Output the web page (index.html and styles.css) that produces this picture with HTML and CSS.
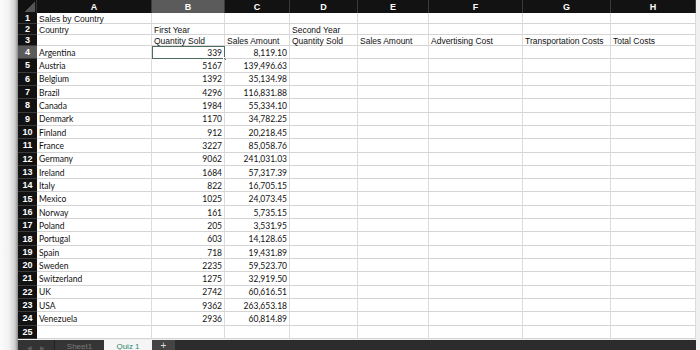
FILE: index.html
```html
<!DOCTYPE html>
<html lang="en">
<head>
  <meta charset="UTF-8" />
  <title>Sales by Country</title>
  <link rel="stylesheet" href="styles.css">
</head>
<body>
  <div class="page">
    <div class="sheet">
      <!-- column headers -->
      <div class="corner"></div>
      <div class="ch">A</div><div class="ch active">B</div><div class="ch">C</div><div class="ch">D</div>
      <div class="ch">E</div><div class="ch">F</div><div class="ch">G</div><div class="ch">H</div>

      <!-- title rows -->
      <div class="rh">1</div><div class="c head">Sales by Country</div><div class="c"></div><div class="c"></div><div class="c"></div><div class="c"></div><div class="c"></div><div class="c"></div><div class="c"></div>
      <div class="rh">2</div><div class="c head">Country</div><div class="c head">First Year</div><div class="c"></div><div class="c head">Second Year</div><div class="c"></div><div class="c"></div><div class="c"></div><div class="c"></div>
      <div class="rh">3</div><div class="c"></div><div class="c head">Quantity Sold</div><div class="c head">Sales Amount</div><div class="c head">Quantity Sold</div><div class="c head">Sales Amount</div><div class="c head">Advertising Cost</div><div class="c head">Transportation Costs</div><div class="c head">Total Costs</div>

      <!-- data rows -->
      <div class="rh active">4</div><div class="c">Argentina</div><div class="c n selected">339<span class="handle"></span></div><div class="c n">8,119.10</div><div class="c"></div><div class="c"></div><div class="c"></div><div class="c"></div><div class="c"></div>
      <div class="rh">5</div><div class="c">Austria</div><div class="c n">5167</div><div class="c n">139,496.63</div><div class="c"></div><div class="c"></div><div class="c"></div><div class="c"></div><div class="c"></div>
      <div class="rh">6</div><div class="c">Belgium</div><div class="c n">1392</div><div class="c n">35,134.98</div><div class="c"></div><div class="c"></div><div class="c"></div><div class="c"></div><div class="c"></div>
      <div class="rh">7</div><div class="c">Brazil</div><div class="c n">4296</div><div class="c n">116,831.88</div><div class="c"></div><div class="c"></div><div class="c"></div><div class="c"></div><div class="c"></div>
      <div class="rh">8</div><div class="c">Canada</div><div class="c n">1984</div><div class="c n">55,334.10</div><div class="c"></div><div class="c"></div><div class="c"></div><div class="c"></div><div class="c"></div>
      <div class="rh">9</div><div class="c">Denmark</div><div class="c n">1170</div><div class="c n">34,782.25</div><div class="c"></div><div class="c"></div><div class="c"></div><div class="c"></div><div class="c"></div>
      <div class="rh">10</div><div class="c">Finland</div><div class="c n">912</div><div class="c n">20,218.45</div><div class="c"></div><div class="c"></div><div class="c"></div><div class="c"></div><div class="c"></div>
      <div class="rh">11</div><div class="c">France</div><div class="c n">3227</div><div class="c n">85,058.76</div><div class="c"></div><div class="c"></div><div class="c"></div><div class="c"></div><div class="c"></div>
      <div class="rh">12</div><div class="c">Germany</div><div class="c n">9062</div><div class="c n">241,031.03</div><div class="c"></div><div class="c"></div><div class="c"></div><div class="c"></div><div class="c"></div>
      <div class="rh">13</div><div class="c">Ireland</div><div class="c n">1684</div><div class="c n">57,317.39</div><div class="c"></div><div class="c"></div><div class="c"></div><div class="c"></div><div class="c"></div>
      <div class="rh">14</div><div class="c">Italy</div><div class="c n">822</div><div class="c n">16,705.15</div><div class="c"></div><div class="c"></div><div class="c"></div><div class="c"></div><div class="c"></div>
      <div class="rh">15</div><div class="c">Mexico</div><div class="c n">1025</div><div class="c n">24,073.45</div><div class="c"></div><div class="c"></div><div class="c"></div><div class="c"></div><div class="c"></div>
      <div class="rh">16</div><div class="c">Norway</div><div class="c n">161</div><div class="c n">5,735.15</div><div class="c"></div><div class="c"></div><div class="c"></div><div class="c"></div><div class="c"></div>
      <div class="rh">17</div><div class="c">Poland</div><div class="c n">205</div><div class="c n">3,531.95</div><div class="c"></div><div class="c"></div><div class="c"></div><div class="c"></div><div class="c"></div>
      <div class="rh">18</div><div class="c">Portugal</div><div class="c n">603</div><div class="c n">14,128.65</div><div class="c"></div><div class="c"></div><div class="c"></div><div class="c"></div><div class="c"></div>
      <div class="rh">19</div><div class="c">Spain</div><div class="c n">718</div><div class="c n">19,431.89</div><div class="c"></div><div class="c"></div><div class="c"></div><div class="c"></div><div class="c"></div>
      <div class="rh">20</div><div class="c">Sweden</div><div class="c n">2235</div><div class="c n">59,523.70</div><div class="c"></div><div class="c"></div><div class="c"></div><div class="c"></div><div class="c"></div>
      <div class="rh">21</div><div class="c">Switzerland</div><div class="c n">1275</div><div class="c n">32,919.50</div><div class="c"></div><div class="c"></div><div class="c"></div><div class="c"></div><div class="c"></div>
      <div class="rh">22</div><div class="c">UK</div><div class="c n">2742</div><div class="c n">60,616.51</div><div class="c"></div><div class="c"></div><div class="c"></div><div class="c"></div><div class="c"></div>
      <div class="rh">23</div><div class="c">USA</div><div class="c n">9362</div><div class="c n">263,653.18</div><div class="c"></div><div class="c"></div><div class="c"></div><div class="c"></div><div class="c"></div>
      <div class="rh">24</div><div class="c">Venezuela</div><div class="c n">2936</div><div class="c n">60,814.89</div><div class="c"></div><div class="c"></div><div class="c"></div><div class="c"></div><div class="c"></div>
      <div class="rh">25</div><div class="c"></div><div class="c"></div><div class="c"></div><div class="c"></div><div class="c"></div><div class="c"></div><div class="c"></div><div class="c"></div>
    </div>

    <div class="tabs">
      <div class="arrows"><span>&#9664;</span><span>&#9654;</span></div>
      <div class="tab">Sheet1</div>
      <div class="tab current">Quiz 1</div>
      <div class="tab add">+</div>
    </div>
  </div>
</body>
</html>
```

FILE: styles.css
```css
body {
  margin: 0;
  background: #efefef;
  font-family: 'Liberation Sans', Arial, sans-serif;
}

.page {
  width: 700px;
  height: 350px;
  overflow: hidden;
  padding-left: 18px;
  box-sizing: border-box;
  background: linear-gradient(90deg, #fbfbfb 0, #f1f1f1 9px, #cfcfcf 15px, #8a8a8a 18px, #f0f0f0 18px);
}

.sheet {
  width: 678px;
  display: grid;
  grid-template-columns: 19px 115px 73px 65px 68px 71px 94px 88px 85px;
  grid-template-rows: 13px repeat(3, 11px) repeat(22, 13.32px);
  background: #fff;
}

.corner {
  background: #111 linear-gradient(135deg, transparent 55%, #555 55%) no-repeat;
  background-size: 13px 11px;
  background-position: right 1px bottom 1px;
  border-right: 1px solid #333;
}

.ch {
  background: #121212;
  color: #fff;
  font-size: 9px;
  font-weight: bold;
  display: flex;
  align-items: center;
  justify-content: center;
  border-right: 1px solid #3a3a3a;
}

.ch.active {
  background: #5b5b5b;
}

.rh {
  background: #121212;
  color: #fff;
  font-size: 9px;
  font-weight: bold;
  display: flex;
  align-items: center;
  justify-content: center;
  border-bottom: 1px solid #3a3a3a;
  box-sizing: border-box;
}

.rh.active {
  background: #5b5b5b;
}

.c {
  position: relative;
  box-sizing: border-box;
  border-right: 1px solid #dcdcdc;
  border-bottom: 1px solid #d4d4d4;
  font-family: Lato, 'Open Sans', sans-serif;
  font-size: 8.5px;
  color: #111;
  display: flex;
  align-items: flex-end;
  padding: 0 2px 1px 2px;
  white-space: nowrap;
  line-height: 1;
}

.c.head {
  font-family: 'Liberation Sans', Arial, sans-serif;
  font-size: 8.5px;
  padding-bottom: 0;
}

.c.n {
  justify-content: flex-end;
}

.c.selected {
  border: 1.5px solid #4c6e5c;
}

.handle {
  position: absolute;
  right: -3px;
  bottom: -3px;
  width: 4px;
  height: 4px;
  background: #4c6e5c;
  border: 1px solid #fff;
  box-sizing: border-box;
}

.tabs {
  display: flex;
  height: 11px;
  margin-top: 1px;
  width: 678px;
  background: #2c2c2c;
  font-size: 8px;
}

.arrows {
  width: 37px;
  display: flex;
  gap: 8px;
  justify-content: center;
  align-items: flex-end;
  color: #5e5e5e;
  font-size: 6px;
  background: #333;
  border-right: 1px solid #222;
  box-sizing: border-box;
}

.tab {
  width: 49px;
  text-align: center;
  line-height: 13px;
  color: #7a7a7a;
  background: #353535;
}

.tab.current {
  width: 48px;
  background: #f5f5f5;
  color: #2f8a72;
}

.tab.add {
  width: 23px;
  color: #ddd;
  background: #444;
  font-size: 10px;
  line-height: 11px;
}
```
